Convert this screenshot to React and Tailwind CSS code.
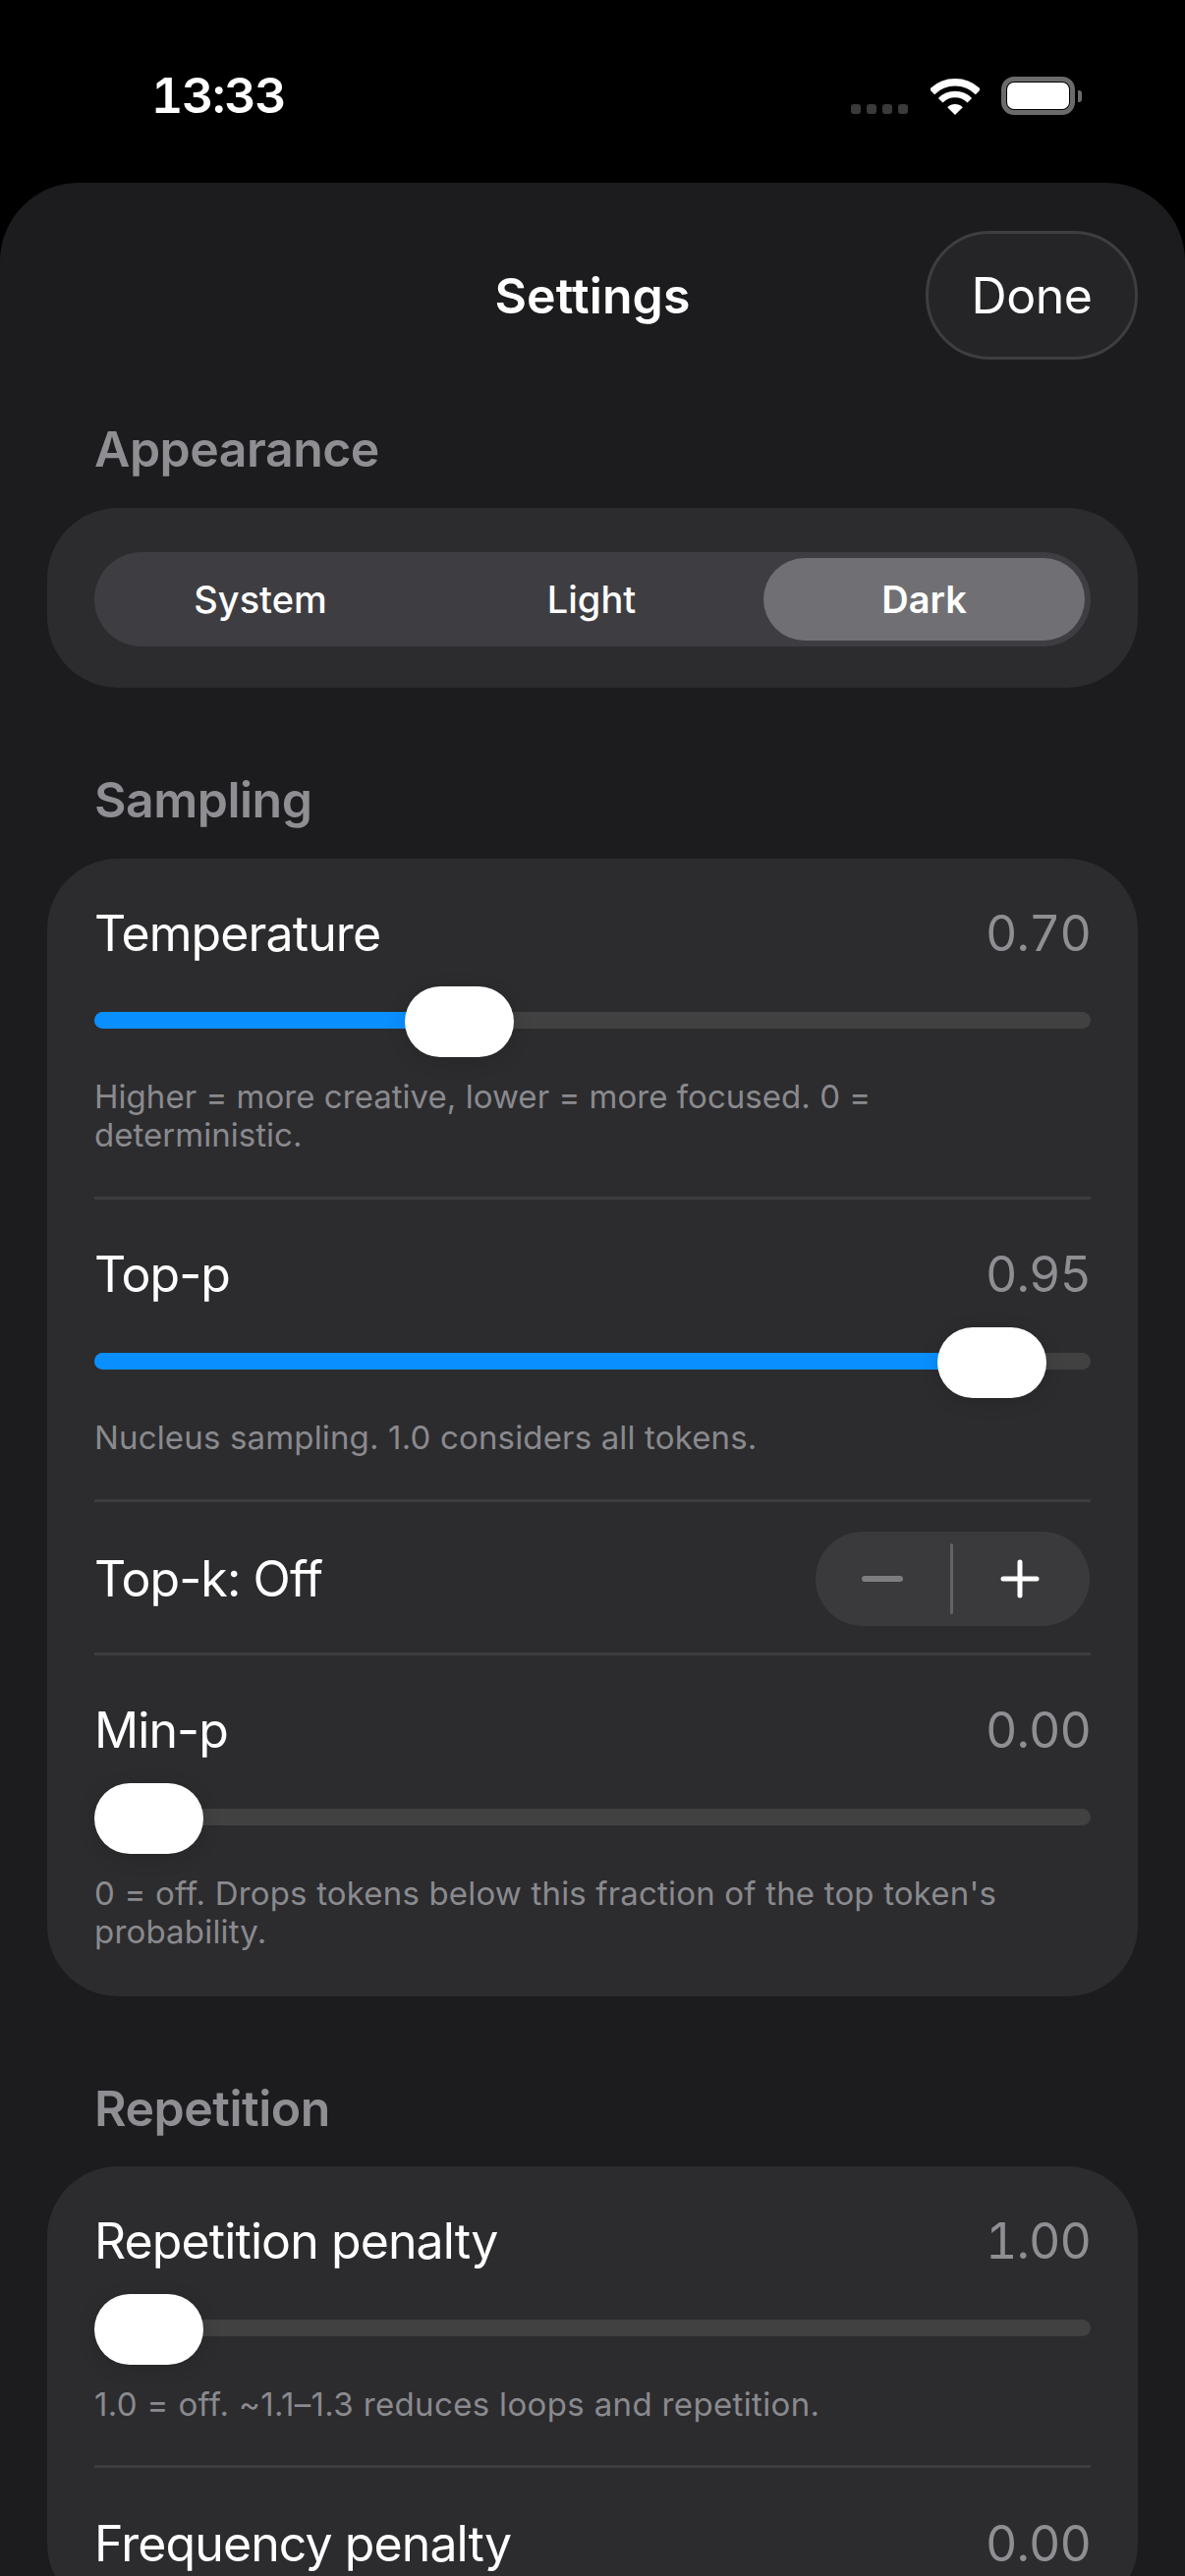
import React from 'react';

const Slider = ({ fraction, filled }) => (
  <div className="relative flex h-[72px] items-center pb-[1px]">
    <div className="h-[17px] w-full overflow-hidden rounded-full bg-[#414142]">
      {filled && (
        <div className="h-full bg-[#0a8fff]" style={{ width: `${fraction * 100}%` }} />
      )}
    </div>
    <div
      className="absolute top-[1px] h-[72px] w-[111px] rounded-[36px] bg-white shadow-[0_4px_20px_rgba(0,0,0,0.12)]"
      style={{ left: `${fraction * 903}px` }}
    />
  </div>
);

const LabelRow = ({ label, value }) => (
  <div className="flex h-[60px] items-center justify-between text-[50px]">
    <span className="tracking-[-0.9px] text-white">{label}</span>
    {value && <span className="tracking-[-0.95px] text-[#8e8e93] tabular-nums">{value}</span>}
  </div>
);

const SliderRow = ({ label, value, fraction, filled, lines, hint, top = 'pt-[46px]', bottom = 'pb-[43px]' }) => (
  <div className={`${top} ${bottom}`}>
    <LabelRow label={label} value={value} />
    <div className="mt-[23px]">
      <Slider fraction={fraction} filled={filled} />
    </div>
    <div className={`mt-[22px] text-[33px] leading-[39px] text-[#8a8a8e] ${hint}`}>
      {lines.map((line) => (
        <div key={line}>{line}</div>
      ))}
    </div>
  </div>
);

const Separator = () => <div className="h-[3px] bg-[#3d3d3f]" />;

const SectionTitle = ({ children, className }) => (
  <div className={`h-[60px] px-[96px] text-[50px] leading-[60px] font-semibold tracking-[-0.5px] text-[#8e8e93] ${className}`}>
    {children}
  </div>
);

const Card = ({ children }) => (
  <div className="mx-[48px] rounded-[72px] bg-[#2c2c2e] px-[48px]">{children}</div>
);

const StatusBar = () => (
  <div className="relative flex h-[186px] items-start justify-between pt-[67px] pr-[105px] pl-[154px]">
    <span className="text-[50px] leading-[60px] font-semibold tracking-[-1.3px] text-white tabular-nums">13:33</span>
    <div className="mt-[11px] flex items-end">
      <div className="mb-[1px] flex gap-[6px]">
        <span className="h-[10px] w-[10px] rounded-[3px] bg-[#3a3a3a]" />
        <span className="h-[10px] w-[10px] rounded-[3px] bg-[#3a3a3a]" />
        <span className="h-[10px] w-[10px] rounded-[3px] bg-[#3a3a3a]" />
        <span className="h-[10px] w-[10px] rounded-[3px] bg-[#3a3a3a]" />
      </div>
      <svg className="ml-[23px]" width="50" height="37" viewBox="0 0 50 37" fill="none">
        <path d="M1.5 13.5A33.2 33.2 0 0 1 48.5 13.5" stroke="white" strokeWidth="7.5" />
        <path d="M10.2 22.2A21 21 0 0 1 39.8 22.2" stroke="white" strokeWidth="6.5" />
        <path d="M25 37L17.2 29.2A11 11 0 0 1 32.8 29.2Z" fill="white" />
      </svg>
      <div className="ml-[22px] flex items-center">
        <div className="h-[39px] w-[75px] rounded-[13px] border-[5px] border-[#6b6b6b] p-[1px]">
          <div className="h-full w-full rounded-[7px] bg-white" />
        </div>
        <div className="ml-[3px] h-[12px] w-[4px] rounded-r-[3px] bg-[#6b6b6b]" />
      </div>
    </div>
  </div>
);

const Stepper = () => (
  <div className="mr-[1px] flex h-[96px] w-[279px] items-center rounded-[48px] bg-[#3a3a3c]">
    <div className="flex flex-1 justify-center">
      <div className="h-[6px] w-[42px] rounded-full bg-[#7d7d80]" />
    </div>
    <div className="h-[72px] w-[3px] rounded-full bg-[#636366]" />
    <div className="flex flex-1 justify-center pr-[3px]">
      <svg width="40" height="40" viewBox="0 0 40 40" fill="none" stroke="white" strokeWidth="5" strokeLinecap="round">
        <path d="M3 20H37M20 3V37" />
      </svg>
    </div>
  </div>
);

export default function App() {
  return (
    <div className="h-[2622px] w-[1206px] overflow-hidden bg-black font-['Inter',sans-serif]">
      <StatusBar />
      <div className="h-[2436px] rounded-t-[80px] bg-[#1c1c1e]">
        <div className="grid grid-cols-[1fr_auto_1fr] items-center px-[48px] pt-[49px]">
          <div />
          <div className="pt-[1px] text-[50px] font-semibold tracking-[0.1px] text-white">Settings</div>
          <div className="flex justify-end">
            <div className="flex h-[131px] w-[216px] items-center justify-center rounded-[65px] border-[3px] border-[#3e3e40] bg-[#252527] pt-[2px] text-[50px] tracking-[-0.5px] text-white">
              Done
            </div>
          </div>
        </div>

        <SectionTitle className="mt-[61px] mb-[30px]">Appearance</SectionTitle>
        <div className="mx-[48px] rounded-[72px] bg-[#2c2c2e] px-[48px] pt-[45px] pb-[42px]">
          <div className="grid h-[96px] grid-cols-3 items-center rounded-[48px] bg-[#3e3e42] text-[38px] font-medium text-white">
            <div className="text-center">System</div>
            <div className="pr-[2px] text-center">Light</div>
            <div className="ml-[5px] mr-[6px] flex h-[84px] items-center justify-center rounded-[42px] bg-[#707074] font-semibold">
              Dark
            </div>
          </div>
        </div>

        <SectionTitle className="mt-[84px] mb-[30px]">Sampling</SectionTitle>
        <Card>
          <SliderRow
            label="Temperature"
            value="0.70"
            fraction={0.35}
            filled
            hint="tracking-[0.03px]"
            lines={['Higher = more creative, lower = more focused. 0 =', 'deterministic.']}
          />
          <Separator />
          <SliderRow
            label="Top-p"
            value="0.95"
            fraction={0.95}
            filled
            hint="tracking-[0.16px]"
            lines={['Nucleus sampling. 1.0 considers all tokens.']}
          />
          <Separator />
          <div className="flex h-[153px] items-center justify-between pt-[3px]">
            <span className="text-[50px] tracking-[-0.9px] text-white">Top-k: Off</span>
            <Stepper />
          </div>
          <Separator />
          <SliderRow
            label="Min-p"
            value="0.00"
            fraction={0}
            bottom="pb-[46px]"
            hint="tracking-[0.18px]"
            lines={["0 = off. Drops tokens below this fraction of the top token's", 'probability.']}
          />
        </Card>

        <SectionTitle className="mt-[84px] mb-[29px]">Repetition</SectionTitle>
        <Card>
          <SliderRow
            label="Repetition penalty"
            value="1.00"
            fraction={0}
            bottom="pb-[42px]"
            hint="tracking-[0.35px]"
            lines={['1.0 = off. ~1.1–1.3 reduces loops and repetition.']}
          />
          <Separator />
          <div className="pt-[47px] pb-[42px]">
            <LabelRow label="Frequency penalty" value="0.00" />
          </div>
        </Card>
      </div>
    </div>
  );
}
